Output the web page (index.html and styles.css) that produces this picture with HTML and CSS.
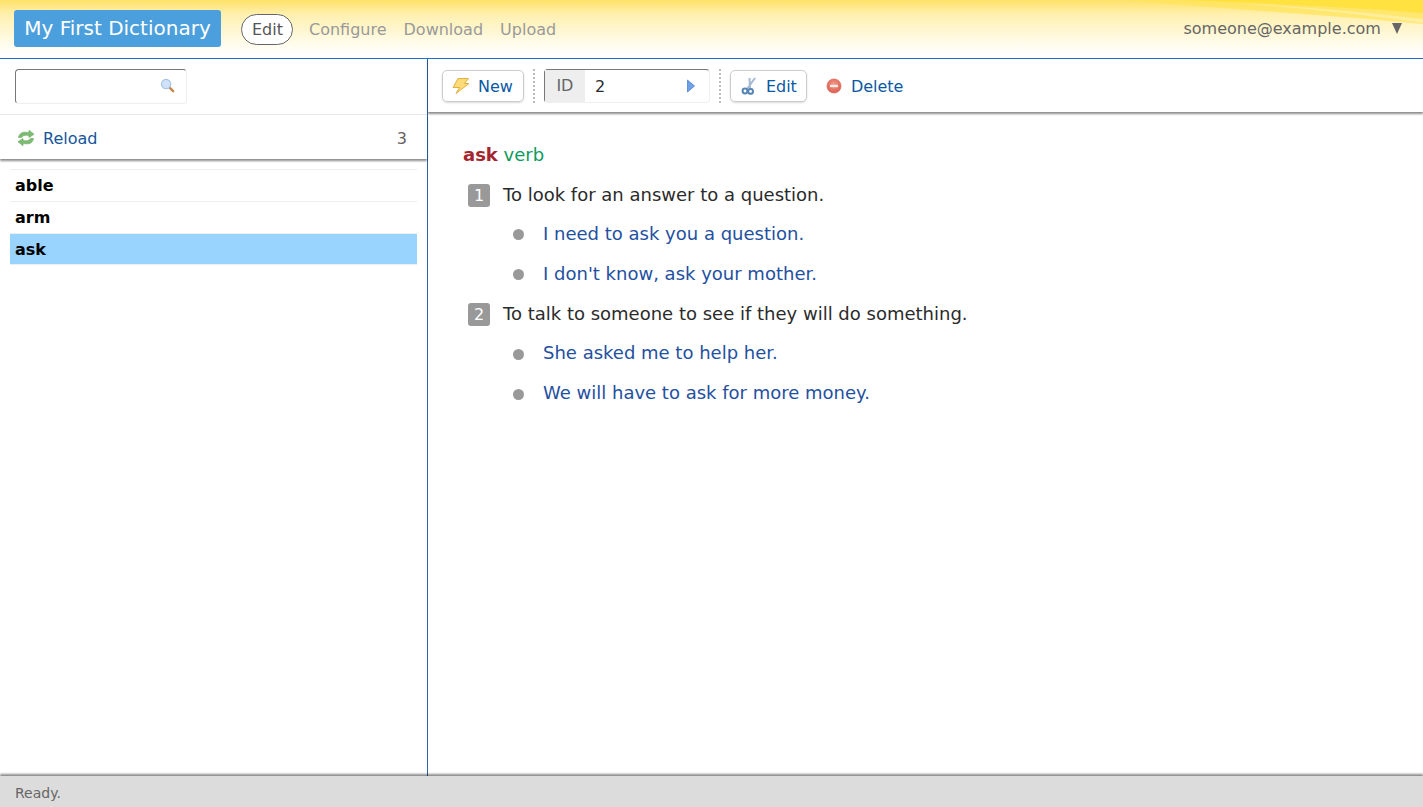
FILE: index.html
```html
<!DOCTYPE html>
<html lang="en">

<head>
    <meta charset="UTF-8">
    <title>My First Dictionary</title>
    <link rel="stylesheet" href="styles.css">
</head>

<body>
    <header class="topbar">
        <svg class="swoosh" viewBox="0 0 1423 58" preserveAspectRatio="none">
            <path d="M0 0H1423V24C1330 15 1210 8 1125 0Z" fill="#ffe45c" opacity="0.75" />
            <path d="M1180 0H1423V13C1350 7 1260 3 1180 0Z" fill="#ffe030" opacity="0.7" />
            <path d="M1235 3C1300 6 1370 13 1423 19V23C1360 14 1300 8 1235 3Z" fill="#fff" opacity="0.3" />
        </svg>
        <a class="brand">My First Dictionary</a>
        <nav class="nav">
            <a class="nav-item active">Edit</a>
            <a class="nav-item">Configure</a>
            <a class="nav-item">Download</a>
            <a class="nav-item">Upload</a>
        </nav>
        <div class="user">someone@example.com <span class="caret"></span></div>
    </header>

    <main class="panes">
        <aside class="left">
            <div class="search-row">
                <div class="search">
                    <svg class="icon-small" viewBox="0 0 16 16">
                        <path d="M9.5 9.5L14 14" stroke="#c48a4a" stroke-width="2.6" stroke-linecap="round" />
                        <circle cx="6.5" cy="6.5" r="5" fill="#cfe2f8" stroke="#a5c2e6" stroke-width="1.2" />
                    </svg>
                </div>
            </div>
            <div class="reload-row">
                <a class="reload">
                    <svg class="icon" viewBox="0 0 18 18">
                        <path d="M1.5 8.5C2 5 5 2.8 8.5 3.2L12 3.4V1.2L17 5.2L12 8.6V6.6C8.5 5.8 6 6.2 4.5 8.5Z" fill="#7dbb72" stroke="#69a862" stroke-width="0.6" stroke-linejoin="round" />
                        <path d="M16.5 9.5C16 13 13 15.2 9.5 14.8L6 14.6V16.8L1 12.8L6 9.4V11.4C9.5 12.2 12 11.8 13.5 9.5Z" fill="#7dbb72" stroke="#69a862" stroke-width="0.6" stroke-linejoin="round" />
                    </svg>
                    Reload
                </a>
                <span class="count">3</span>
            </div>
            <ul class="words">
                <li>able</li>
                <li>arm</li>
                <li class="selected">ask</li>
            </ul>
        </aside>

        <section class="right">
            <div class="toolbar">
                <a class="btn">
                    <svg class="icon" viewBox="0 0 18 18">
                        <path d="M6 1.5H16.5L12.5 6.5H17L4 16.5L7.5 10.5H1Z" fill="#fadb78" stroke="#e0b040" stroke-width="1" stroke-linejoin="round" />
                    </svg>
                    New
                </a>
                <span class="sep"></span>
                <div class="id-box">
                    <span class="id-label">ID</span>
                    <span class="id-value">2</span>
                    <svg class="id-arrow" viewBox="0 0 8 14">
                        <path d="M0.5 1L7.5 7L0.5 13Z" fill="#6ea0ea" stroke="#3f74c8" stroke-width="0.7" />
                    </svg>
                </div>
                <span class="sep"></span>
                <a class="btn narrow">
                    <svg class="icon" viewBox="0 0 18 18">
                        <path d="M15 1L7 12M9.5 1L10 12" stroke="#a3b9d4" stroke-width="2" fill="none" />
                        <circle cx="5" cy="14" r="2.4" fill="none" stroke="#5585b5" stroke-width="2" />
                        <circle cx="10.6" cy="14.4" r="2.4" fill="none" stroke="#5585b5" stroke-width="2" />
                    </svg>
                    Edit
                </a>
                <a class="btn plain">
                    <svg class="icon" viewBox="0 0 18 18">
                        <defs>
                            <radialGradient id="del-fill" cx="50%" cy="40%" r="60%">
                                <stop offset="0" stop-color="#f4a090" />
                                <stop offset="1" stop-color="#dc5a4c" />
                            </radialGradient>
                        </defs>
                        <circle cx="9" cy="9" r="7" fill="url(#del-fill)" stroke="#d9695c" stroke-width="0.8" />
                        <rect x="5" y="7.8" width="8" height="2.4" fill="#fbe9e6" />
                    </svg>
                    Delete
                </a>
            </div>

            <article class="entry">
                <div class="headword"><b>ask</b> <span class="pos">verb</span></div>
                <div class="sense">
                    <span class="num">1</span>
                    <span class="gloss">To look for an answer to a question.</span>
                </div>
                <div class="example"><span class="dot"></span>I need to ask you a question.</div>
                <div class="example"><span class="dot"></span>I don't know, ask your mother.</div>
                <div class="sense">
                    <span class="num">2</span>
                    <span class="gloss">To talk to someone to see if they will do something.</span>
                </div>
                <div class="example"><span class="dot"></span>She asked me to help her.</div>
                <div class="example"><span class="dot"></span>We will have to ask for more money.</div>
            </article>
        </section>
    </main>

    <footer class="status">Ready.</footer>
</body>

</html>
```

FILE: styles.css
```css
*,
html {
    margin: 0;
    padding: 0;
    box-sizing: border-box;
}

html,
body {
    height: 100%;
    overflow: hidden;
}

body {
    display: flex;
    flex-direction: column;
    font-family: "DejaVu Sans", sans-serif;
    font-size: 16px;
    color: #2b2b2b;
    background: #fff;
}

/* header */
.topbar {
    position: relative;
    display: flex;
    align-items: center;
    height: 59px;
    padding: 0 21px 1px 14px;
    border-bottom: 1px solid #1f6fd0;
    background: linear-gradient(to bottom, #ffe168 0, #fff0ae 14px, #fffbe8 42px, #fff 54px);
}

.swoosh {
    position: absolute;
    top: 0;
    left: 0;
    width: 100%;
    height: 58px;
}

.brand {
    position: relative;
    width: 207px;
    height: 37px;
    line-height: 36px;
    text-align: center;
    font-size: 20px;
    color: #fff;
    background: #4b9fdc;
    border-radius: 3px;
}

.nav {
    position: relative;
    display: flex;
    align-items: center;
    margin: 1px 0 0 20px;
    gap: 17px;
    color: #999;
}

.nav-item {
    line-height: 29px;
}

.nav-item.active {
    padding: 0 9px 0 10px;
    margin-right: -1px;
    color: #555;
    background: #fff;
    border: 1px solid #666;
    border-radius: 16px;
}

.user {
    position: relative;
    margin-left: auto;
    color: #666;
}

.caret {
    display: inline-block;
    width: 0;
    height: 0;
    margin-left: 6px;
    border-left: 5.5px solid transparent;
    border-right: 5.5px solid transparent;
    border-top: 11px solid #666;
}

/* panes */
.panes {
    flex: 1;
    display: flex;
    min-height: 0;
}

.left {
    width: 428px;
    flex-shrink: 0;
    border-right: 1px solid #2d62a8;
}

.search-row {
    height: 56px;
    padding: 10px 15px;
    border-bottom: 1px solid #e8e8e8;
}

.search {
    display: flex;
    align-items: center;
    justify-content: flex-end;
    width: 172px;
    height: 35px;
    padding-right: 11px;
    border: 1px solid #eee;
    border-top-color: #777;
    border-left-color: #777;
    border-radius: 4px;
}

.icon-small {
    width: 15px;
    height: 15px;
    margin-bottom: 2px;
}

.icon {
    width: 18px;
    height: 18px;
    flex-shrink: 0;
}

.reload-row {
    display: flex;
    align-items: center;
    justify-content: space-between;
    height: 44px;
    padding: 2px 20px 0 17px;
    box-shadow: 0 2px 2px rgba(0, 0, 0, 0.45);
}

.reload {
    display: flex;
    align-items: center;
    gap: 8px;
    color: #15559c;
}

.count {
    color: #665f5f;
}

.words {
    list-style: none;
    margin: 10px 10px 0 10px;
    border-top: 1px solid #eee;
    font-weight: bold;
    color: #000;
}

.words li {
    height: 32px;
    line-height: 31px;
    padding-left: 5px;
    border-bottom: 1px solid #eee;
}

.words .selected {
    height: 31px;
    background: #99d3ff;
}

.right {
    flex: 1;
    min-width: 0;
}

.toolbar {
    display: flex;
    align-items: center;
    height: 53px;
    padding: 1px 14px 0;
    box-shadow: 0 2px 2px rgba(0, 0, 0, 0.45);
}

.btn {
    display: flex;
    align-items: center;
    gap: 8px;
    height: 32px;
    padding: 0 10px 0 9px;
    color: #0a58a5;
    border: 1px solid #ccc;
    border-radius: 5px;
    box-shadow: 0 1px 2px rgba(0, 0, 0, 0.15);
}

.btn.narrow {
    padding-right: 9px;
}

.btn.plain {
    margin-left: 9px;
    border: 0;
    box-shadow: none;
}

.sep {
    height: 34px;
    margin: 0 9px;
    border-left: 2px dotted #bbb;
}

.id-box {
    display: flex;
    align-items: center;
    width: 166px;
    height: 34px;
    border: 1px solid #eee;
    border-top-color: #777;
    border-left-color: #777;
    border-radius: 4px;
}

.id-label {
    align-self: stretch;
    width: 40px;
    line-height: 32px;
    text-align: center;
    color: #666;
    background: #eee;
}

.id-value {
    flex: 1;
    padding-left: 10px;
}

.id-arrow {
    width: 8px;
    height: 14px;
    margin-right: 14px;
}

.entry {
    padding: 31px 35px;
    font-size: 18px;
}

.headword {
    line-height: 24px;
    margin-bottom: 9px;
}

.headword b {
    color: #a5252f;
}

.pos {
    color: #0c9b5a;
}

.sense {
    display: flex;
    align-items: center;
    gap: 13px;
    height: 38.5px;
    padding-left: 5px;
}

.example + .sense {
    height: 39.5px;
}

.gloss {
    margin-bottom: 2px;
}

.num {
    width: 22px;
    height: 23px;
    line-height: 23px;
    text-align: center;
    color: #fff;
    background: #999;
    border-radius: 3px;
    font-size: 16px;
}

.example {
    display: flex;
    align-items: center;
    height: 40px;
    padding: 0 0 3px 50px;
    color: #2450a0;
}

.dot {
    width: 11px;
    height: 11px;
    margin: 3px 19px 0 0;
    background: #999;
    border-radius: 50%;
}

.status {
    height: 31px;
    line-height: 34px;
    padding-left: 15px;
    font-size: 14px;
    color: #666;
    background: #dcdcdc;
    box-shadow: 0 -2px 2px rgba(0, 0, 0, 0.45);
    position: relative;
}
```
